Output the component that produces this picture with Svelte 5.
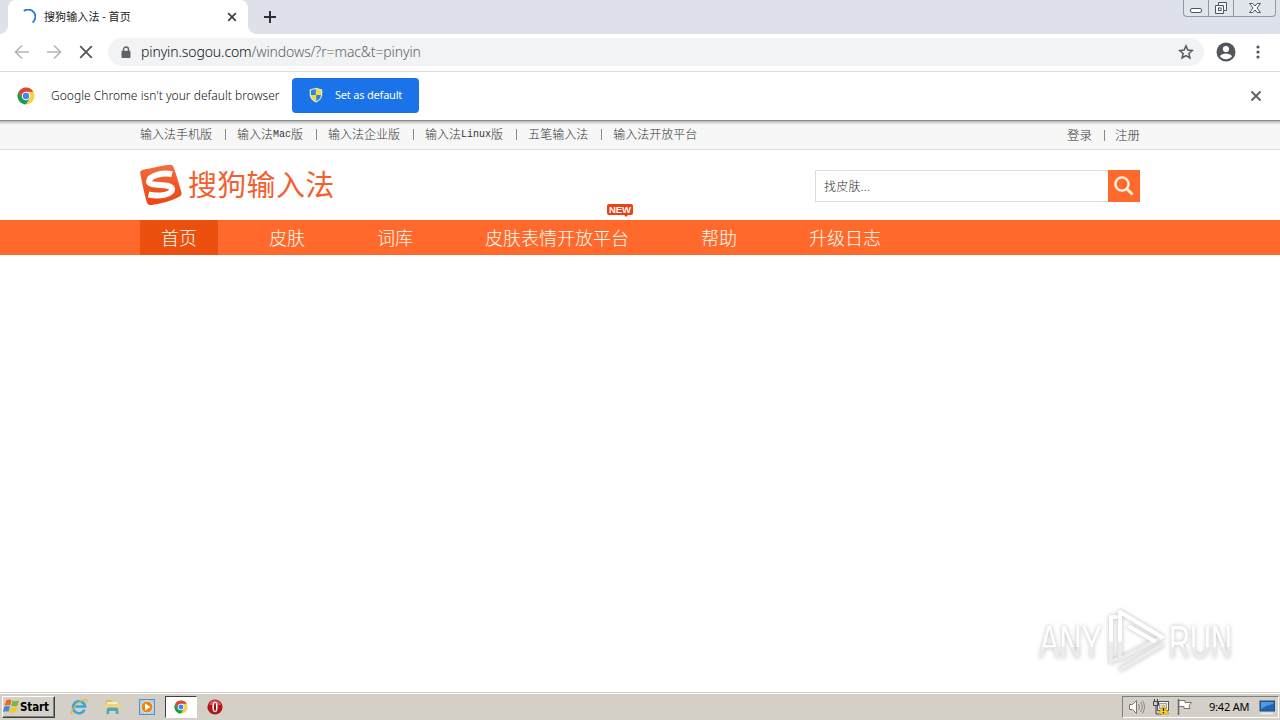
<script lang="ts">
  type TopLink = { before: string; latin?: string; after?: string };

  const topLinks: TopLink[] = [
    { before: "输入法手机版" },
    { before: "输入法", latin: "Mac", after: "版" },
    { before: "输入法企业版" },
    { before: "输入法", latin: "Linux", after: "版" },
    { before: "五笔输入法" },
    { before: "输入法开放平台" },
  ];

  const navItems = [
    { label: "首页" },
    { label: "皮肤" },
    { label: "词库" },
    { label: "皮肤表情开放平台", isNew: true },
    { label: "帮助" },
    { label: "升级日志" },
  ];

  let activeItem = $state("首页");
  let query = $state("");
  let infobarVisible = $state(true);
</script>

{#snippet chromeLogo(size: number)}
  <svg width={size} height={size} viewBox="0 0 18 18">
    <circle cx="9" cy="9" r="8.5" fill="#fbcf4a" />
    <path d="M1.64 4.75A8.5 8.5 0 0 1 16.36 4.75H9L5.3 11.1Z" fill="#dd4437" />
    <path d="M1.64 4.75A8.5 8.5 0 0 0 9 17.5L12.7 11.1 9 13.2 5.3 11.1Z" fill="#1a9c58" />
    <circle cx="9" cy="9" r="4.2" fill="#fff" />
    <circle cx="9" cy="9" r="3.2" fill="#4285f4" />
  </svg>
{/snippet}

<div class="screen">
  <div class="tab-strip">
    <div class="tab">
      <svg class="spinner" width="16" height="16" viewBox="0 0 16 16">
        <path d="M3.8 2A7 7 0 1 1 12.5 13.6" fill="none" stroke="#2a7bd0" stroke-width="1.8" />
      </svg>
      <span class="tab-title">搜狗输入法 - 首页</span>
      <svg width="10" height="10" viewBox="0 0 10 10">
        <path d="M1.2 1.2 8.8 8.8M8.8 1.2 1.2 8.8" stroke="#3c4043" stroke-width="1.7" />
      </svg>
    </div>
    <svg class="new-tab" width="12" height="12" viewBox="0 0 12 12">
      <path d="M6 0V12M0 6H12" stroke="#2c2f33" stroke-width="2" />
    </svg>
    <div class="window-buttons">
      <span class="win-button">
        <svg width="14" height="14" viewBox="0 0 14 14">
          <rect x="1.5" y="7.5" width="11" height="4" rx="1.5" fill="#fff" stroke="#4c5565" />
        </svg>
      </span>
      <span class="win-button">
        <svg width="14" height="14" viewBox="0 0 14 14">
          <path d="M4.5 1.5h8v8h-3v3h-8v-8h3z" fill="#f4f5f7" stroke="#4c5565" />
          <path d="M4.5 4.5h5v5" fill="none" stroke="#4c5565" />
          <rect x="4.5" y="7" width="2.6" height="2.6" fill="#fff" stroke="#4c5565" />
        </svg>
      </span>
      <span class="win-button wide">
        <svg width="14" height="14" viewBox="0 0 14 14">
          <path
            d="M1.5 2.5h3.3L7 5l2.2-2.5h3.3L9 7l3.5 4.5H9.2L7 9l-2.2 2.5H1.5L5 7z"
            fill="#fff"
            stroke="#4c5565"
          />
        </svg>
      </span>
    </div>
  </div>

  <div class="toolbar">
    <div class="tool-icons">
      <svg width="16" height="16" viewBox="0 0 16 16">
        <path d="M15 8H2M8 1.5 1.5 8 8 14.5" fill="none" stroke="#b5b7ba" stroke-width="1.7" />
      </svg>
      <svg width="16" height="16" viewBox="0 0 16 16">
        <path d="M1 8H14M8 1.5 14.5 8 8 14.5" fill="none" stroke="#b5b7ba" stroke-width="1.7" />
      </svg>
      <svg width="16" height="16" viewBox="0 0 16 16">
        <path d="M2.2 2.2 13.8 13.8M13.8 2.2 2.2 13.8" stroke="#54575b" stroke-width="1.8" />
      </svg>
    </div>
    <div class="address-bar">
      <svg width="10" height="13" viewBox="0 0 10 13">
        <path d="M2.5 6V3.5a2.5 2.5 0 0 1 5 0V6" fill="none" stroke="#5f6368" stroke-width="1.4" />
        <rect x="0.5" y="4.7" width="9" height="7.3" rx="1" fill="#5f6368" />
      </svg>
      <span class="url"><span class="host">pinyin.sogou.com</span>/windows/?r=mac&amp;t=pinyin</span>
      <svg width="16" height="16" viewBox="0 0 24 24">
        <path
          d="m12 2.8 2.7 6.3 6.8.6-5.2 4.5 1.6 6.7-5.9-3.6-5.9 3.6 1.6-6.7L2.5 9.7l6.8-.6z"
          fill="none"
          stroke="#54585d"
          stroke-width="2.2"
        />
      </svg>
    </div>
    <svg class="profile" width="20" height="20" viewBox="0 0 20 20">
      <circle cx="10" cy="10" r="9.5" fill="#53575c" />
      <circle cx="10" cy="7" r="3.1" fill="#fff" />
      <path d="M3.9 14.3C5 12.4 8 11.6 10 11.6s5 .8 6.1 2.7C14.5 16.3 12.4 17.3 10 17.3s-4.5-1-6.1-3z" fill="#fff" />
    </svg>
    <svg class="menu" width="4" height="16" viewBox="0 0 4 16">
      <circle cx="2" cy="3" r="1.6" fill="#54585d" />
      <circle cx="2" cy="8" r="1.6" fill="#54585d" />
      <circle cx="2" cy="13" r="1.6" fill="#54585d" />
    </svg>
  </div>

  {#if infobarVisible}
    <div class="infobar">
      {@render chromeLogo(18)}
      <span class="infobar-text">Google Chrome isn't your default browser</span>
      <button class="default-button">
        <svg width="14" height="16" viewBox="0 0 14 16">
          <path d="M7 .7 13.3 2.5V7c0 4.5-3 7-6.3 8.5C3.7 14 .7 11.5.7 7V2.5z" fill="#dfe6d5" />
          <path d="M6.8 2v6H2V3.3z" fill="#2f83d6" />
          <path d="M7.2 2v6H12V3.3z" fill="#f8d837" />
          <path d="M6.8 8v6.2C4 12.8 2.2 10.9 2 8z" fill="#f8d837" />
          <path d="M7.2 8v6.2C10 12.8 11.8 10.9 12 8z" fill="#2f83d6" />
        </svg>
        <span>Set as default</span>
      </button>
      <button class="infobar-close" aria-label="Close" onclick={() => (infobarVisible = false)}>
        <svg width="12" height="12" viewBox="0 0 12 12">
          <path d="M1.5 1.5 10.5 10.5M10.5 1.5 1.5 10.5" stroke="#5f6368" stroke-width="2" />
        </svg>
      </button>
    </div>
  {/if}

  <div class="page">
    <div class="top-bar">
      <div class="container">
        <div class="top-links">
          {#each topLinks as link}
            <span class="top-link"
              >{link.before}{#if link.latin}<span class="latin">{link.latin}</span>{/if}{link.after ?? ""}</span
            >
          {/each}
        </div>
        <div class="account">
          <span>登录</span>
          <span>注册</span>
        </div>
      </div>
    </div>

    <header class="container header">
      <div class="brand">
        <svg width="42" height="42" viewBox="0 0 42 42">
          <defs>
            <linearGradient id="brand-fill" x1="0" y1="0" x2="0" y2="1">
              <stop offset="0" stop-color="#f36e40" />
              <stop offset="1" stop-color="#ed4312" />
            </linearGradient>
          </defs>
          <path
            d="M4 5.5C13 4 22 1.5 30 .8c2-.2 3.1.8 3.7 2.7C36.5 11 39 20 41.3 28c.6 2.3 0 3.7-2 4.8C31 37 21 40 11.5 41c-2.8.3-4-.5-4.7-2.9C4 29 2 18 .2 9.5-.3 7.3 1.3 6 4 5.5z"
            fill="url(#brand-fill)"
          />
          <path
            d="M32 10.2C24 8.3 9.5 11 9 17.500c-.3 5.5 22.5 1.5 23 7.5 .3 5.7-13 8-23.5 5.5"
            fill="none"
            stroke="#fff"
            stroke-width="6"
          />
        </svg>
        <span class="brand-name">搜狗输入法</span>
      </div>
      <div class="search">
        <input type="text" placeholder="找皮肤..." bind:value={query} />
        <button class="search-button" aria-label="搜索">
          <svg width="20" height="20" viewBox="0 0 20 20">
            <circle cx="8" cy="8" r="6.6" fill="none" stroke="#fff3e6" stroke-width="2.4" />
            <path d="M12.5 12.5 18.5 18.5" stroke="#fff3e6" stroke-width="2.8" />
          </svg>
        </button>
      </div>
    </header>

    <nav class="nav">
      <div class="container nav-list">
        {#each navItems as item}
          <button
            class="nav-item"
            class:active={item.label === activeItem}
            onclick={() => (activeItem = item.label)}
          >
            {item.label}
            {#if item.isNew}
              <span class="new-badge">NEW</span>
            {/if}
          </button>
        {/each}
      </div>
    </nav>
  </div>

  <div class="taskbar">
    <div class="start">
      <svg width="17" height="17" viewBox="0 0 16 16">
        <path d="M3 2Q5.5.8 8 2L6.8 7Q4 6 1.5 7.2z" fill="#ef6525" />
        <path d="M9 2.4q3 1.3 6-.3L13.7 7Q11 8.5 7.8 7.3z" fill="#77b843" />
        <path d="M1.3 8.2Q4 7 6.5 8L5.2 13Q2.5 12 0 13.2z" fill="#3c8ed4" />
        <path d="M7.5 8.4q3 1.3 6-.3L12.2 13Q9 14.5 6.2 13.3z" fill="#f8c52d" />
      </svg>
      <span>Start</span>
    </div>
    <div class="quick-launch">
      <span class="launcher">
        <svg width="18" height="18" viewBox="0 0 18 18">
          <path d="M14.5 11.8A6 6 0 1 1 15 8.5H4.5" fill="none" stroke="#3ba6dc" stroke-width="2.6" />
          <path d="M2.5 16.5C-1 15 5 6 12 2.5c4-2 5.5-1 4.4 2" fill="none" stroke="#e5b93a" stroke-width="1.3" />
        </svg>
      </span>
      <span class="launcher">
        <svg width="18" height="18" viewBox="0 0 18 18">
          <path d="M2 2h5l1 2h7v9H2z" fill="#dcb955" />
          <path d="M3 4h11v5H3z" fill="#f7eebc" />
          <path d="M1 6h15v8H1z" fill="#eed57c" />
          <path d="M2.5 16v-3.5q0-3 3-3h6q3 0 3 3V16h-2.7v-3h-6.600v3z" fill="#4aa6cf" />
        </svg>
      </span>
      <span class="launcher">
        <svg width="18" height="18" viewBox="0 0 18 18">
          <rect x="1.5" y="1.5" width="15" height="15" fill="#a8d0ed" stroke="#4e94c9" />
          <circle cx="9" cy="9" r="6" fill="#ef8519" stroke="#fff" stroke-width=".7" />
          <path d="m7 5.5 5.5 3.5L7 12.5z" fill="#fff" />
        </svg>
      </span>
      <span class="launcher running">{@render chromeLogo(14)}</span>
      <span class="launcher">
        <svg width="16" height="16" viewBox="0 0 16 16">
          <circle cx="8" cy="8" r="7.6" fill="#b5141b" />
          <path d="M2 6a6.2 6.2 0 0 1 12 0z" fill="#d4545a" />
          <ellipse cx="8" cy="8" rx="2.6" ry="5.2" fill="#fff" />
          <ellipse cx="8" cy="8" rx="1" ry="4.3" fill="#8f0c12" />
        </svg>
      </span>
    </div>
    <div class="tray">
      <svg width="18" height="18" viewBox="0 0 18 18">
        <path d="M1.5 6.5h3l4-4v13l-4-4h-3z" fill="#fff" stroke="#777" />
        <path d="M10.5 6q2 3 0 6M12.5 4q3.5 5 0 10M14.5 2.5q4 6.5 0 13" fill="none" stroke="#888" />
      </svg>
      <svg width="18" height="18" viewBox="0 0 18 18">
        <rect x="5.5" y="3.5" width="11" height="9" fill="#fafafa" stroke="#555" />
        <rect x="7.5" y="5.5" width="7" height="5" fill="#ddd" stroke="#999" />
        <path d="M2.5 1v3M5.5 1v3M1.5 3.5h5v4h-5zM4 8v8h6" fill="none" stroke="#444" />
        <path d="m11.5 7 5.5 9h-11z" fill="#f8cc20" stroke="#c09408" stroke-width=".6" />
        <path d="M11.5 10v3M11.5 14v1.3" stroke="#222" stroke-width="1.3" />
      </svg>
      <svg width="18" height="18" viewBox="0 0 18 18">
        <path d="M2.5 1v16" stroke="#666" stroke-width="1.5" />
        <path d="M3 2.5h6v2h6.5l-2.5 3 1 3H8v-2H3z" fill="#fff" stroke="#777" />
      </svg>
      <span class="clock">9:42 AM</span>
      <svg width="16" height="16" viewBox="0 0 16 16">
        <rect x="1" y="2" width="14.5" height="10" fill="#1e65b5" stroke="#244b78" />
        <path d="M2 3h12.5v2Q7 6 2 10z" fill="#4d9be2" />
        <path d="M2 14.5h12" stroke="#eee" stroke-width="1.5" />
      </svg>
    </div>
  </div>

  <svg class="watermark" width="230" height="76" viewBox="0 0 230 76">
    <defs>
      <linearGradient id="mark-fill" x1="0" y1="0" x2="0" y2="1">
        <stop offset="0.6" stop-color="#fff" />
        <stop offset="0.6" stop-color="#ececec" />
      </linearGradient>
    </defs>
    <text x="6" y="54" textLength="63" lengthAdjust="spacingAndGlyphs">ANY</text>
    <text x="136" y="54" textLength="63" lengthAdjust="spacingAndGlyphs">RUN</text>
    <g fill="none" stroke-linejoin="round" stroke-linecap="round">
      <path d="M87 55V8l42 25L87 55M78 36V58l6-3M88 65 129 41" stroke="#ececec" stroke-width="4" />
      <path d="M83 13h-5V36M87 36V8l42 25M97 23l24 14" stroke="#fff" stroke-width="4" />
    </g>
  </svg>
</div>

<style>
  :global(body) {
    margin: 0;
    overflow: hidden;
  }

  .screen {
    position: relative;
    display: flex;
    flex-direction: column;
    width: 1280px;
    height: 720px;
    background: #fff;
    font-family: "Noto Sans", "Noto Sans CJK SC", sans-serif;
    overflow: hidden;
  }

  svg {
    display: block;
    flex-shrink: 0;
  }

  button {
    border: 0;
    padding: 0;
    font-family: inherit;
    cursor: pointer;
  }

  /* Browser window */
  .tab-strip {
    display: flex;
    align-items: center;
    height: 34px;
    flex-shrink: 0;
    background: #dee1e9;
  }
  .tab {
    position: relative;
    display: flex;
    align-items: center;
    box-sizing: border-box;
    width: 240px;
    height: 34px;
    margin-left: 8px;
    padding: 0 11px 0 12px;
    background: #fff;
    border-radius: 8px 8px 0 0;
  }
  /* Curved feet of the active tab */
  .tab::before,
  .tab::after {
    content: "";
    position: absolute;
    bottom: 0;
    width: 8px;
    height: 8px;
  }
  .tab::before {
    left: -8px;
    background: radial-gradient(circle at 0 0, transparent 7.5px, #fff 8px);
  }
  .tab::after {
    right: -8px;
    background: radial-gradient(circle at 100% 0, transparent 7.5px, #fff 8px);
  }
  .tab-title {
    flex: 1;
    margin-left: 8px;
    padding-bottom: 2px;
    font-family: "Noto Sans CJK SC", sans-serif;
    font-size: 11px;
    line-height: 16px;
    letter-spacing: 0.1px;
    color: #222;
  }
  .new-tab {
    margin-left: 16px;
  }
  .window-buttons {
    display: flex;
    align-self: flex-start;
    box-sizing: border-box;
    height: 17px;
    margin: 0 4px 0 auto;
    border: 1px solid #9299a6;
    border-top: 0;
    border-radius: 0 0 4px 4px;
    background: #e2e5eb;
  }
  .win-button {
    display: flex;
    align-items: center;
    justify-content: center;
    width: 24px;
  }
  .win-button + .win-button {
    border-left: 1px solid #9299a6;
  }
  .win-button.wide {
    width: 41px;
  }

  .toolbar {
    display: flex;
    align-items: center;
    box-sizing: border-box;
    height: 38px;
    flex-shrink: 0;
    padding: 0 0 1px 14px;
    border-bottom: 1px solid #dadce0;
  }
  .tool-icons {
    display: flex;
    gap: 16px;
  }
  .address-bar {
    display: flex;
    align-items: center;
    box-sizing: border-box;
    width: 1096px;
    height: 28px;
    margin-left: 14px;
    padding: 0 10px 0 13px;
    border-radius: 14px;
    background: #f1f3f4;
  }
  .url {
    flex: 1;
    margin-left: 10px;
    padding-bottom: 1px;
    font-size: 14px;
    font-weight: 300;
    letter-spacing: -0.11px;
    color: #5f6368;
  }
  .host {
    color: #101114;
  }
  .profile {
    margin-left: 12px;
  }
  .menu {
    margin-left: 20px;
  }

  .infobar {
    display: flex;
    align-items: center;
    box-sizing: border-box;
    height: 49px;
    flex-shrink: 0;
    padding: 0 18px 0 17px;
    border-bottom: 1px solid #8c8c8c;
  }
  .infobar-text {
    width: 228px;
    margin-left: 16px;
    padding-bottom: 2px;
    font-size: 12px;
    font-weight: 300;
    letter-spacing: 0.03px;
    color: #101114;
    white-space: nowrap;
  }
  .default-button {
    display: flex;
    align-items: center;
    width: 127px;
    height: 35px;
    margin: 0 0 1px 13px;
    padding: 0 0 1px 17px;
    border-radius: 4px;
    background: #1a73e8;
    color: #fff;
    font-size: 11px;
    letter-spacing: -0.2px;
    gap: 12px;
    white-space: nowrap;
  }
  .default-button span {
    padding-bottom: 1px;
  }
  .infobar-close {
    margin-left: auto;
    background: none;
  }

  /* Site */
  .page {
    flex: 1;
  }
  .container {
    width: 1000px;
    margin: 0 auto;
  }
  .top-bar {
    box-sizing: border-box;
    height: 29px;
    border-bottom: 1px solid #dedede;
    background: linear-gradient(#b4b4b4, #dcdcdc 2px, #f7f7f7 4px);
    font-family: "Noto Sans CJK SC", sans-serif;
    font-size: 12px;
    line-height: 26px;
    color: #333;
  }
  .top-bar .container,
  .top-links,
  .account {
    display: flex;
  }
  .top-bar .container {
    justify-content: space-between;
  }
  .top-link,
  .account span {
    display: flex;
    font-weight: 300;
    white-space: nowrap;
  }
  .top-link + .top-link::before {
    content: "";
    width: 1px;
    height: 11px;
    margin: 8px 11px 0 13px;
    background: #888;
  }
  .latin {
    font-family: "Liberation Mono", monospace;
    font-size: 10px;
    line-height: 27px;
  }
  .account {
    line-height: 28px;
    font-size: 12.5px;
  }
  .account span + span::before {
    content: "";
    width: 1px;
    height: 11px;
    margin: 9px 10px 0 12px;
    background: #888;
  }

  .header {
    display: flex;
    align-items: center;
    justify-content: space-between;
    height: 70px;
  }
  .brand {
    display: flex;
    align-items: center;
  }
  .brand-name {
    margin: -4px 0 0 6px;
    font-family: "Noto Sans CJK SC", sans-serif;
    font-size: 29px;
    font-weight: 400;
    line-height: 40px;
    letter-spacing: 0.3px;
    color: #f2602f;
  }
  .search {
    display: flex;
    margin-top: 2px;
  }
  .search input {
    box-sizing: border-box;
    width: 293px;
    height: 32px;
    padding: 0 8px 1px;
    border: 1px solid #ddd;
    border-right: 0;
    border-radius: 0;
    font-family: "Noto Sans CJK SC", sans-serif;
    font-size: 12px;
    font-weight: 300;
    letter-spacing: 0.2px;
    outline: none;
  }
  .search input::placeholder {
    color: #333;
  }
  .search-button {
    display: flex;
    align-items: center;
    justify-content: center;
    width: 32px;
    height: 32px;
    background: #ff6a2c;
  }

  .nav {
    background: #ff6a2c;
  }
  .nav-list {
    display: flex;
    gap: 30px;
  }
  .nav-item {
    position: relative;
    height: 35px;
    padding: 0 21px;
    background: none;
    color: #fffdf2;
    font-family: "Noto Sans CJK SC", sans-serif;
    font-size: 18px;
    font-weight: 300;
    line-height: 35px;
  }
  .nav-item.active {
    background: #eb500f;
  }
  .new-badge {
    position: absolute;
    top: -16px;
    right: 17px;
    width: 26px;
    height: 11px;
    border-radius: 2px;
    background: #e64417;
    color: #fff;
    font-family: "Liberation Sans", sans-serif;
    font-size: 9.5px;
    font-weight: bold;
    line-height: 12px;
    text-align: center;
  }
  .new-badge::after {
    content: "";
    position: absolute;
    top: 11px;
    left: 17px;
    border: 2px solid transparent;
    border-top-color: #e64417;
  }

  /* Desktop taskbar */
  .taskbar {
    display: flex;
    align-items: center;
    box-sizing: border-box;
    height: 28px;
    flex-shrink: 0;
    padding: 0 1px 0 2px;
    border-top: 1px solid #d4d0c8;
    background: #d4d0c8;
    box-shadow: inset 0 1px #fff;
  }
  .start {
    display: flex;
    align-items: center;
    box-sizing: border-box;
    width: 53px;
    height: 22px;
    border: 1px solid;
    border-color: #fff #404040 #404040 #fff;
    box-shadow: inset -1px -1px #808080;
    font-family: "DejaVu Sans Condensed", "DejaVu Sans", sans-serif;
    font-size: 11.5px;
    font-weight: bold;
    letter-spacing: -0.1px;
    color: #000;
  }
  .quick-launch {
    display: flex;
    gap: 2px;
    margin-left: 8px;
  }
  .launcher {
    display: flex;
    align-items: center;
    justify-content: center;
    box-sizing: border-box;
    width: 32px;
    height: 22px;
  }
  .launcher.running {
    border: 1px solid;
    border-color: #404040 #fff #fff #404040;
    background: #fff;
  }
  .tray {
    display: flex;
    align-items: center;
    box-sizing: border-box;
    width: 157px;
    height: 22px;
    margin-left: auto;
    padding-left: 5px;
    gap: 6px;
    border: 1px solid;
    border-color: #808080 #fff #fff #808080;
  }
  .clock {
    width: 41px;
    margin: 0 3px 0 9px;
    font-size: 11px;
    letter-spacing: -0.2px;
    color: #000;
    white-space: nowrap;
  }

  .watermark {
    position: absolute;
    left: 1033px;
    top: 604px;
    filter: drop-shadow(0 0 2px #bbb);
  }
  .watermark text {
    font-family: "Liberation Sans", sans-serif;
    font-size: 46px;
    fill: url(#mark-fill);
  }
</style>
